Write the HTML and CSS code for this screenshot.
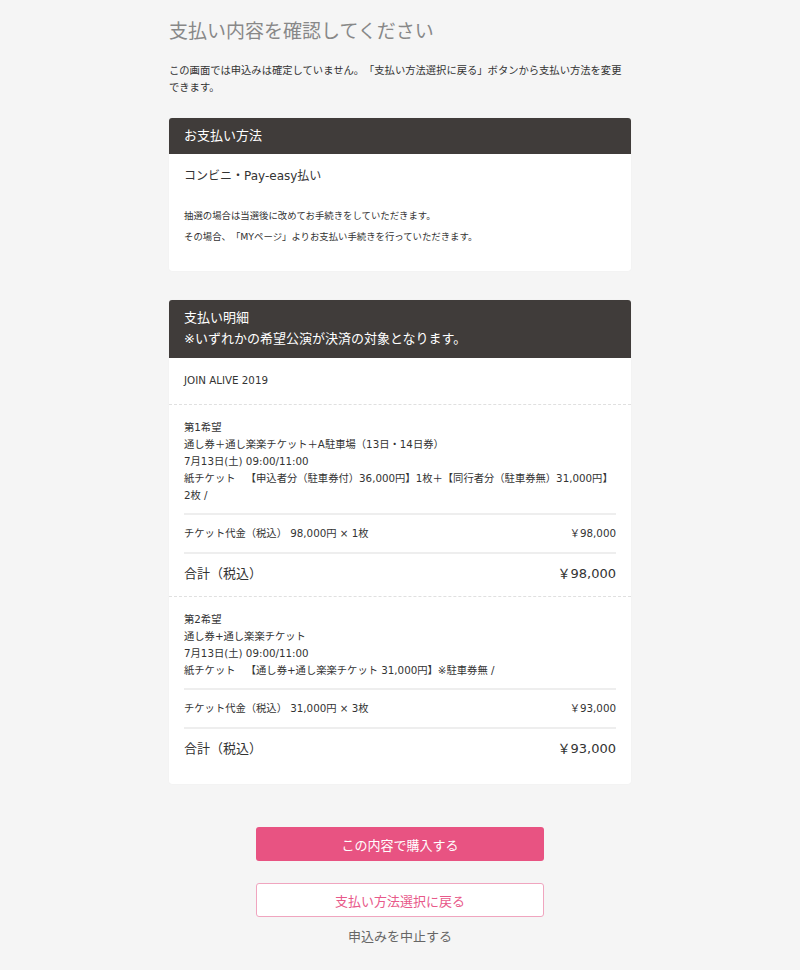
FILE: index.html
```html
<!DOCTYPE html>
<html lang="ja">
  <head>
    <meta charset="UTF-8" />
    <meta name="viewport" content="width=device-width, initial-scale=1.0" />
    <title>支払い内容を確認してください</title>
    <link rel="stylesheet" href="styles.css">
  </head>
  <body>
    <div class="page">
      <h1 class="page-title">支払い内容を確認してください</h1>
      <p class="page-lead">この画面では申込みは確定していません。「支払い方法選択に戻る」ボタンから支払い方法を変更できます。</p>

      <div class="card">
        <div class="card-head">お支払い方法</div>
        <div class="card-body pay-body">
          <p class="pay-method">コンビニ・Pay-easy払い</p>
          <p class="pay-note">抽選の場合は当選後に改めてお手続きをしていただきます。<br>その場合、「MYページ」よりお支払い手続きを行っていただきます。</p>
        </div>
      </div>

      <div class="card card-detail">
        <div class="card-head card-head-tall">支払い明細<br>※いずれかの希望公演が決済の対象となります。</div>
        <div class="event-name">JOIN ALIVE 2019</div>

        <div class="choice">
          <p class="choice-info">第1希望<br>通し券＋通し楽楽チケット＋A駐車場（13日・14日券）<br>7月13日(土) 09:00/11:00<br>紙チケット　【申込者分（駐車券付）36,000円】1枚＋【同行者分（駐車券無）31,000円】2枚 /</p>
          <div class="price-row">
            <span>チケット代金（税込） 98,000円 × 1枚</span>
            <span>￥98,000</span>
          </div>
          <div class="price-row total-row">
            <span>合計（税込）</span>
            <span>￥98,000</span>
          </div>
        </div>

        <div class="choice choice-last">
          <p class="choice-info">第2希望<br>通し券+通し楽楽チケット<br>7月13日(土) 09:00/11:00<br>紙チケット　【通し券+通し楽楽チケット 31,000円】※駐車券無 /</p>
          <div class="price-row">
            <span>チケット代金（税込） 31,000円 × 3枚</span>
            <span>￥93,000</span>
          </div>
          <div class="price-row total-row">
            <span>合計（税込）</span>
            <span>￥93,000</span>
          </div>
        </div>
      </div>

      <div class="actions">
        <button class="btn btn-primary">この内容で購入する</button>
        <button class="btn btn-outline">支払い方法選択に戻る</button>
        <a class="cancel-link" href="#">申込みを中止する</a>
      </div>
    </div>
  </body>
</html>
```

FILE: styles.css
```css
body {
  margin: 0;
  background: #f5f5f5;
  font-family: "DejaVu Sans", "Noto Sans CJK JP", sans-serif;
  color: #333;
  text-spacing-trim: space-all;
}
p {
  margin: 0;
}
.page {
  width: 462px;
  margin: 0 auto;
  padding-top: 16px;
  padding-bottom: 20px;
}
.page-title {
  margin: 0;
  font-size: 19px;
  line-height: 30px;
  font-weight: normal;
  color: #888;
}
.page-lead {
  margin-top: 16px;
  font-size: 10.3px;
  line-height: 17px;
  color: #333;
}
.card {
  margin-top: 22px;
  background: #fff;
  border-radius: 3px;
  box-shadow: 0 0 1px rgba(0, 0, 0, 0.08);
  overflow: hidden;
}
.card-detail {
  margin-top: 29px;
}
.card-head {
  background: #403c3a;
  color: #fff;
  font-size: 13px;
  line-height: 36px;
  padding: 0 15px;
}
.card-head-tall {
  line-height: 21px;
  padding: 7px 15px 9px;
}
.pay-body {
  padding: 12px 15px 24px;
}
.pay-method {
  font-size: 12px;
  line-height: 21px;
}
.pay-note {
  margin-top: 18px;
  font-size: 9.4px;
  line-height: 21px;
}
.event-name {
  font-size: 10.3px;
  line-height: 17px;
  padding: 14px 15px 15px;
  border-bottom: 1px dashed #e0e0e0;
}
.choice {
  padding: 14px 15px 2px;
  border-bottom: 1px dashed #e0e0e0;
}
.choice-last {
  border-bottom: none;
  padding-bottom: 15px;
}
.choice-info {
  font-size: 10.3px;
  line-height: 17px;
  padding-bottom: 9px;
}
.price-row {
  display: flex;
  justify-content: space-between;
  border-top: 2px solid #eee;
  font-size: 10.3px;
  line-height: 17px;
  padding: 10px 0;
}
.total-row {
  font-size: 13px;
  line-height: 20px;
}
.actions {
  margin-top: 43px;
  display: flex;
  flex-direction: column;
  align-items: center;
}
.btn {
  width: 288px;
  height: 34px;
  border-radius: 3px;
  font-family: inherit;
  font-size: 13px;
  cursor: pointer;
}
.btn-primary {
  background: #e85382;
  color: #fff;
  border: none;
}
.btn-outline {
  margin-top: 22px;
  background: #fff;
  color: #e8598a;
  border: 1px solid #f0a5bf;
}
.cancel-link {
  margin-top: 10px;
  font-size: 13px;
  line-height: 20px;
  color: #666;
  text-decoration: none;
}
```
